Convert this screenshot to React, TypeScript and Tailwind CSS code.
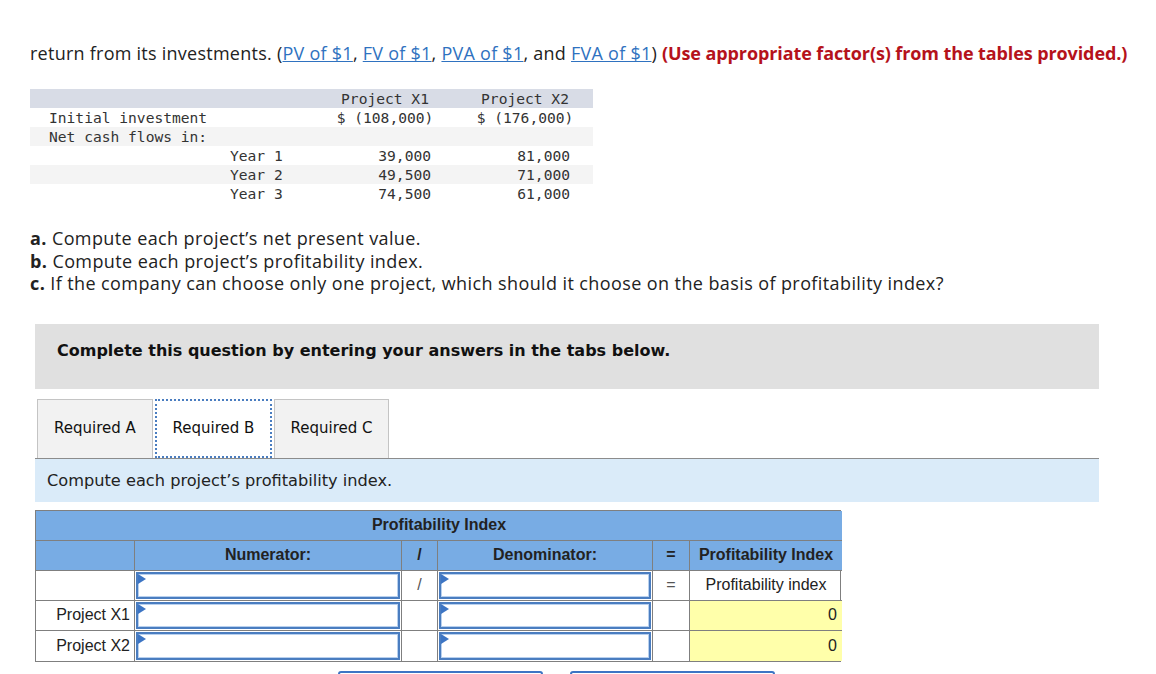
import React from "react"

const mono = { fontFamily: '"DejaVu Sans Mono", monospace' }
const body = { fontFamily: '"Open Sans", Lato, sans-serif' }

const InputCell = () => (
  <div className="relative h-full w-full border-2 border-[#4a7dc0] bg-white shadow-[inset_0_0_0_1px_#b8d0ee]">
    <div className="absolute left-0 top-0 h-0 w-0 border-y-[5px] border-l-[8px] border-y-transparent border-l-[#3d75c4]" />
  </div>
)

const cashRows = [
  { label: "Year 1", x1: "39,000", x2: "81,000", bg: "bg-white" },
  { label: "Year 2", x1: "49,500", x2: "71,000", bg: "bg-[#f4f4f4]" },
  { label: "Year 3", x1: "74,500", x2: "61,000", bg: "bg-white" },
]

export default function App() {
  return (
    <div className="min-h-[674px] w-[1156px] overflow-hidden bg-white pt-[41px] text-[#222]">
      <p className="whitespace-nowrap pl-[30px] text-[18px] leading-[24px] tracking-[0.25px]" style={body}>
        return from its investments. (
        <a className="text-[#2f72c0] underline">PV of $1</a>,{" "}
        <a className="text-[#2f72c0] underline">FV of $1</a>,{" "}
        <a className="text-[#2f72c0] underline">PVA of $1</a>, and{" "}
        <a className="text-[#2f72c0] underline">FVA of $1</a>){" "}
        <span className="font-bold tracking-[-0.1px] text-[#b5121b]">(Use appropriate factor(s) from the tables provided.)</span>
      </p>

      {/* data table */}
      <div className="ml-[30px] mt-[24px] w-[563px] text-[14.6px] leading-[19px] text-[#333]" style={mono}>
        <div className="flex bg-[#d8dce6]">
          <div className="w-[300px]" />
          <div className="w-[110px] text-center">Project X1</div>
          <div className="w-[30px]" />
          <div className="w-[110px] text-center">Project X2</div>
        </div>
        <div className="flex bg-white">
          <div className="w-[300px] pl-[19px]">Initial investment</div>
          <div className="w-[110px] text-center">$ (108,000)</div>
          <div className="w-[30px]" />
          <div className="w-[110px] text-center">$ (176,000)</div>
        </div>
        <div className="flex bg-[#f4f4f4]">
          <div className="w-[300px] pl-[19px]">Net cash flows in:</div>
        </div>
        {cashRows.map((r) => (
          <div key={r.label} className={`flex ${r.bg}`}>
            <div className="w-[300px] pl-[200px]">{r.label}</div>
            <div className="w-[101px] text-right">{r.x1}</div>
            <div className="w-[139px] text-right">{r.x2}</div>
          </div>
        ))}
      </div>

      <div className="mt-[24px] pl-[30px] text-[18px] leading-[22.5px] tracking-[0.4px]" style={body}>
        <p>
          <b>a.</b> Compute each project’s net present value.
        </p>
        <p>
          <b>b.</b> Compute each project’s profitability index.
        </p>
        <p>
          <b>c.</b> If the company can choose only one project, which should it choose on the basis of profitability index?
        </p>
      </div>

      <div className="ml-[35px] mt-[29px] w-[1064px]" style={{ fontFamily: '"DejaVu Sans", Verdana, sans-serif' }}>
        <div className="h-[65px] bg-[#e0e0e0] pl-[22px] pt-[16px] text-[16px] font-bold leading-[22px] text-[#111]">
          Complete this question by entering your answers in the tabs below.
        </div>

        <div className="mt-[10px] flex h-[59px] items-stretch gap-[2px] pl-[2px] text-[15px] text-[#111]">
          <div className="flex w-[116px] items-center justify-center border border-b-0 border-[#c4c4c4] bg-[#f2f2f2]">Required A</div>
          <div className="flex w-[117px] items-center justify-center border-2 border-dotted border-[#4a7dc0] bg-white">Required B</div>
          <div className="flex w-[115px] items-center justify-center border border-b-0 border-[#c4c4c4] bg-[#f2f2f2]">Required C</div>
        </div>

        <div className="flex h-[44px] items-center border-t border-[#8c8c8c] bg-[#daebf9] pl-[12px] pt-[2px] text-[16.2px] text-[#222]">
          Compute each project’s profitability index.
        </div>
      </div>

      {/* profitability table */}
      <div className="ml-[35px] mt-[8px] w-[806px] text-[16px] text-[#222]" style={{ fontFamily: '"Liberation Sans", Arial, sans-serif' }}>
        <div className="grid grid-cols-[99px_267px_36px_215px_37px_152px] border border-[#7f7f7f]">
          <div className="col-span-6 flex h-[30px] items-center justify-center border-b border-[#7f7f7f] bg-[#78ace4] font-bold">
            Profitability Index
          </div>
          <div className="h-[30px] border-r border-b border-[#7f7f7f] bg-[#78ace4]" />
          <div className="flex h-[30px] items-center justify-center border-r border-b border-[#7f7f7f] bg-[#78ace4] font-bold">Numerator:</div>
          <div className="flex h-[30px] items-center justify-center border-r border-b border-[#7f7f7f] bg-[#78ace4] font-bold">/</div>
          <div className="flex h-[30px] items-center justify-center border-r border-b border-[#7f7f7f] bg-[#78ace4] font-bold">Denominator:</div>
          <div className="flex h-[30px] items-center justify-center border-r border-b border-[#7f7f7f] bg-[#78ace4] font-bold">=</div>
          <div className="flex h-[30px] items-center justify-center border-b border-[#7f7f7f] bg-[#78ace4] font-bold">Profitability Index</div>

          <div className="h-[30px] border-r border-b border-[#7f7f7f]" />
          <div className="h-[30px] border-r border-b border-[#7f7f7f] p-[1px]"><InputCell /></div>
          <div className="flex h-[30px] items-center justify-center border-r border-b border-[#7f7f7f] text-[#555]">/</div>
          <div className="h-[30px] border-r border-b border-[#7f7f7f] p-[1px]"><InputCell /></div>
          <div className="flex h-[30px] items-center justify-center border-r border-b border-[#7f7f7f] text-[#555]">=</div>
          <div className="flex h-[30px] items-center justify-center border-b border-[#7f7f7f]">Profitability index</div>

          {["Project X1", "Project X2"].map((p, i) => (
            <React.Fragment key={p}>
              <div className={`flex h-[30px] items-center justify-end border-r border-[#7f7f7f] pr-[4px] ${i === 0 ? "border-b" : ""}`}>{p}</div>
              <div className={`h-[30px] border-r border-[#7f7f7f] p-[1px] ${i === 0 ? "border-b" : ""}`}><InputCell /></div>
              <div className={`h-[30px] border-r border-[#7f7f7f] ${i === 0 ? "border-b" : ""}`} />
              <div className={`h-[30px] border-r border-[#7f7f7f] p-[1px] ${i === 0 ? "border-b" : ""}`}><InputCell /></div>
              <div className={`h-[30px] border-r border-[#7f7f7f] ${i === 0 ? "border-b" : ""}`} />
              <div className={`flex h-[30px] items-center justify-end bg-[#ffffaa] pr-[5px] ${i === 0 ? "border-b border-[#7f7f7f]" : ""}`}>0</div>
            </React.Fragment>
          ))}
        </div>
      </div>

      <div className="mt-[9px] flex gap-[27px] pl-[338px]">
        <div className="h-[30px] w-[205px] rounded-t-[3px] border-2 border-[#3d75c4] bg-white" />
        <div className="h-[30px] w-[205px] rounded-t-[3px] border-2 border-[#3d75c4] bg-white" />
      </div>
    </div>
  )
}
